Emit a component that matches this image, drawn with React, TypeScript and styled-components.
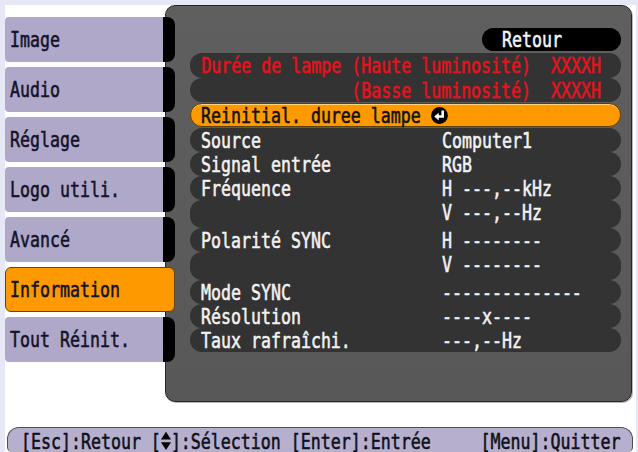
import React from "react";
import styled, { createGlobalStyle } from "styled-components";

const GlobalStyle = createGlobalStyle`
  html, body { margin: 0; padding: 0; }
  body {
    background: #e6e8f5;
    width: 638px;
    height: 452px;
    overflow: hidden;
    font-family: "DejaVu Sans Mono", monospace;
    font-size: 16.6px;
    font-weight: normal;
    -webkit-text-stroke: 0.45px currentColor;
  }
`;

const Screen = styled.div`
  margin: 5px 2px 0 5px;
  height: 447px;
  background: #ffffff;
  display: flex;
  flex-direction: column;
`;

const Top = styled.div`
  display: flex;
  height: 397px;
`;

const Menu = styled.div`
  position: relative;
  z-index: 1;
  width: 170px;
  flex: none;
  padding-top: 12px;
  display: flex;
  flex-direction: column;
  gap: 5px;
`;

const Tab = styled.div`
  height: 45px;
  display: flex;
`;

const TabLabel = styled.div<{ $active?: boolean }>`
  box-sizing: border-box;
  width: ${(p) => (p.$active ? 170 : 158)}px;
  height: 100%;
  display: flex;
  align-items: center;
  padding-left: ${(p) => (p.$active ? 4 : 5)}px;
  background: ${(p) => (p.$active ? "#ff9900" : "#b0a8c8")};
  border: ${(p) => (p.$active ? "1px solid #5e4518" : "none")};
  border-radius: ${(p) => (p.$active ? "6px" : "4px 0 0 4px")};
  color: #12122a;
`;

const TabCap = styled.div`
  width: 12px;
  height: 100%;
  background: #000;
  border-radius: 0 8px 8px 0;
`;

const Glyphs = styled.span`
  display: inline-block;
  line-height: 17px;
  transform: scaleY(1.3);
  white-space: pre;
`;

const Panel = styled.div`
  box-sizing: border-box;
  width: 467px;
  height: 397px;
  margin-left: -10px;
  background: linear-gradient(#5f5f5f, #585858);
  border: 1px solid #262626;
  border-radius: 10px;
  box-shadow: 1px 1px 0 #b8b8b8;
  padding: 22px 10px 0 24px;
  display: flex;
  flex-direction: column;
`;

const BackRow = styled.div`
  height: 23px;
  margin-bottom: 2px;
  display: flex;
  justify-content: flex-end;
`;

const BackPill = styled.div`
  width: 139px;
  height: 23px;
  box-sizing: border-box;
  padding-left: 20px;
  display: flex;
  align-items: center;
  background: #000;
  border-radius: 12px;
  color: #f4f4f4;
`;

const LampRow = styled.div<{ $h?: number }>`
  height: ${(p) => p.$h ?? 24}px;
  border-radius: 12px;
  background: #333333;
  display: flex;
  align-items: center;
  justify-content: flex-end;
  padding-right: 20px;
  color: #e8121c;
`;

const Row = styled.div<{ $h?: number; $selected?: boolean; $mt?: number }>`
  box-sizing: border-box;
  height: ${(p) => p.$h ?? 24}px;
  margin-top: ${(p) => p.$mt ?? 0}px;
  padding-bottom: ${(p) => ((p.$h ?? 24) > 24 ? (p.$h ?? 24) - 24 : 0)}px;
  border-radius: 12px;
  background: ${(p) => (p.$selected ? "#ff9900" : "#333333")};
  border: ${(p) => (p.$selected ? "1px solid #5a3e00" : "none")};
  box-shadow: ${(p) => (p.$selected ? "inset 0 1px 0 #ffd27a" : "none")};
  display: grid;
  grid-template-columns: 241px 1fr;
  align-items: center;
  padding-left: ${(p) => (p.$selected ? 10 : 11)}px;
  color: ${(p) => (p.$selected ? "#111" : "#f2f2f2")};
`;

const Action = styled.div`
  display: flex;
  align-items: center;
  gap: 10px;
`;

const EnterIcon = styled.svg`
  width: 17px;
  height: 17px;
  flex: none;
`;

const Footer = styled.div`
  box-sizing: border-box;
  margin: 25px 3px 0 2px;
  height: 25px;
  background: #b7afce;
  border: 1.5px solid #4e4e4e;
  border-bottom: none;
  border-radius: 12px 12px 5px 5px;
  padding: 2px 0 0 13px;
  display: flex;
  align-items: center;
  color: #101018;
`;

const Arrows = styled.svg`
  width: 10px;
  height: 14px;
  vertical-align: -1px;
`;

const tabs = ["Image", "Audio", "Réglage", "Logo utili.", "Avancé", "Information", "Tout Réinit."];

type Info = { label: string; value: string; h?: number };
const infos: Info[] = [
  { label: "Source", value: "Computer1" },
  { label: "Signal entrée", value: "RGB" },
  { label: "Fréquence", value: "H ---,--kHz" },
  { label: "", value: "V ---,--Hz", h: 28 },
  { label: "Polarité SYNC", value: "H --------" },
  { label: "", value: "V --------", h: 28 },
  { label: "Mode SYNC", value: "--------------" },
  { label: "Résolution", value: "----x----" },
  { label: "Taux rafraîchi.", value: "---,--Hz" },
];

export default function App() {
  return (
    <>
      <GlobalStyle />
      <Screen>
        <Top>
          <Menu>
            {tabs.map((t) => {
              const active = t === "Information";
              return (
                <Tab key={t}>
                  <TabLabel $active={active}>
                    <Glyphs>{t}</Glyphs>
                  </TabLabel>
                  {!active && <TabCap />}
                </Tab>
              );
            })}
          </Menu>
          <Panel>
            <BackRow>
              <BackPill>
                <Glyphs>Retour</Glyphs>
              </BackPill>
            </BackRow>
            <LampRow $h={25}>
              <Glyphs>Durée de lampe (Haute luminosité)  XXXXH</Glyphs>
            </LampRow>
            <LampRow>
              <Glyphs>(Basse luminosité)  XXXXH</Glyphs>
            </LampRow>
            <Row $selected $mt={1}>
              <Action>
                <Glyphs>Reinitial. duree lampe</Glyphs>
                <EnterIcon viewBox="0 0 16 16">
                  <circle cx="8" cy="8" r="7.9" fill="#000" />
                  <path d="M11 3.3 V9 H6.5" stroke="#fff" strokeWidth="2.4" fill="none" />
                  <polygon points="3,9 7.3,5.4 7.3,12.6" fill="#fff" />
                </EnterIcon>
              </Action>
            </Row>
            {infos.map((r, i) => (
              <Row key={i} $h={r.h} $mt={i === 0 ? 1 : 0}>
                <Glyphs>{r.label}</Glyphs>
                <Glyphs>{r.value}</Glyphs>
              </Row>
            ))}
          </Panel>
        </Top>
        <Footer>
          <Glyphs>
            {"[Esc]:Retour ["}
            <Arrows viewBox="0 0 10 14">
              <polygon points="5,0 10,6 0,6" fill="#000" />
              <polygon points="0,8 10,8 5,14" fill="#000" />
            </Arrows>
            {"]:Sélection [Enter]:Entrée     [Menu]:Quitter"}
          </Glyphs>
        </Footer>
      </Screen>
    </>
  );
}
